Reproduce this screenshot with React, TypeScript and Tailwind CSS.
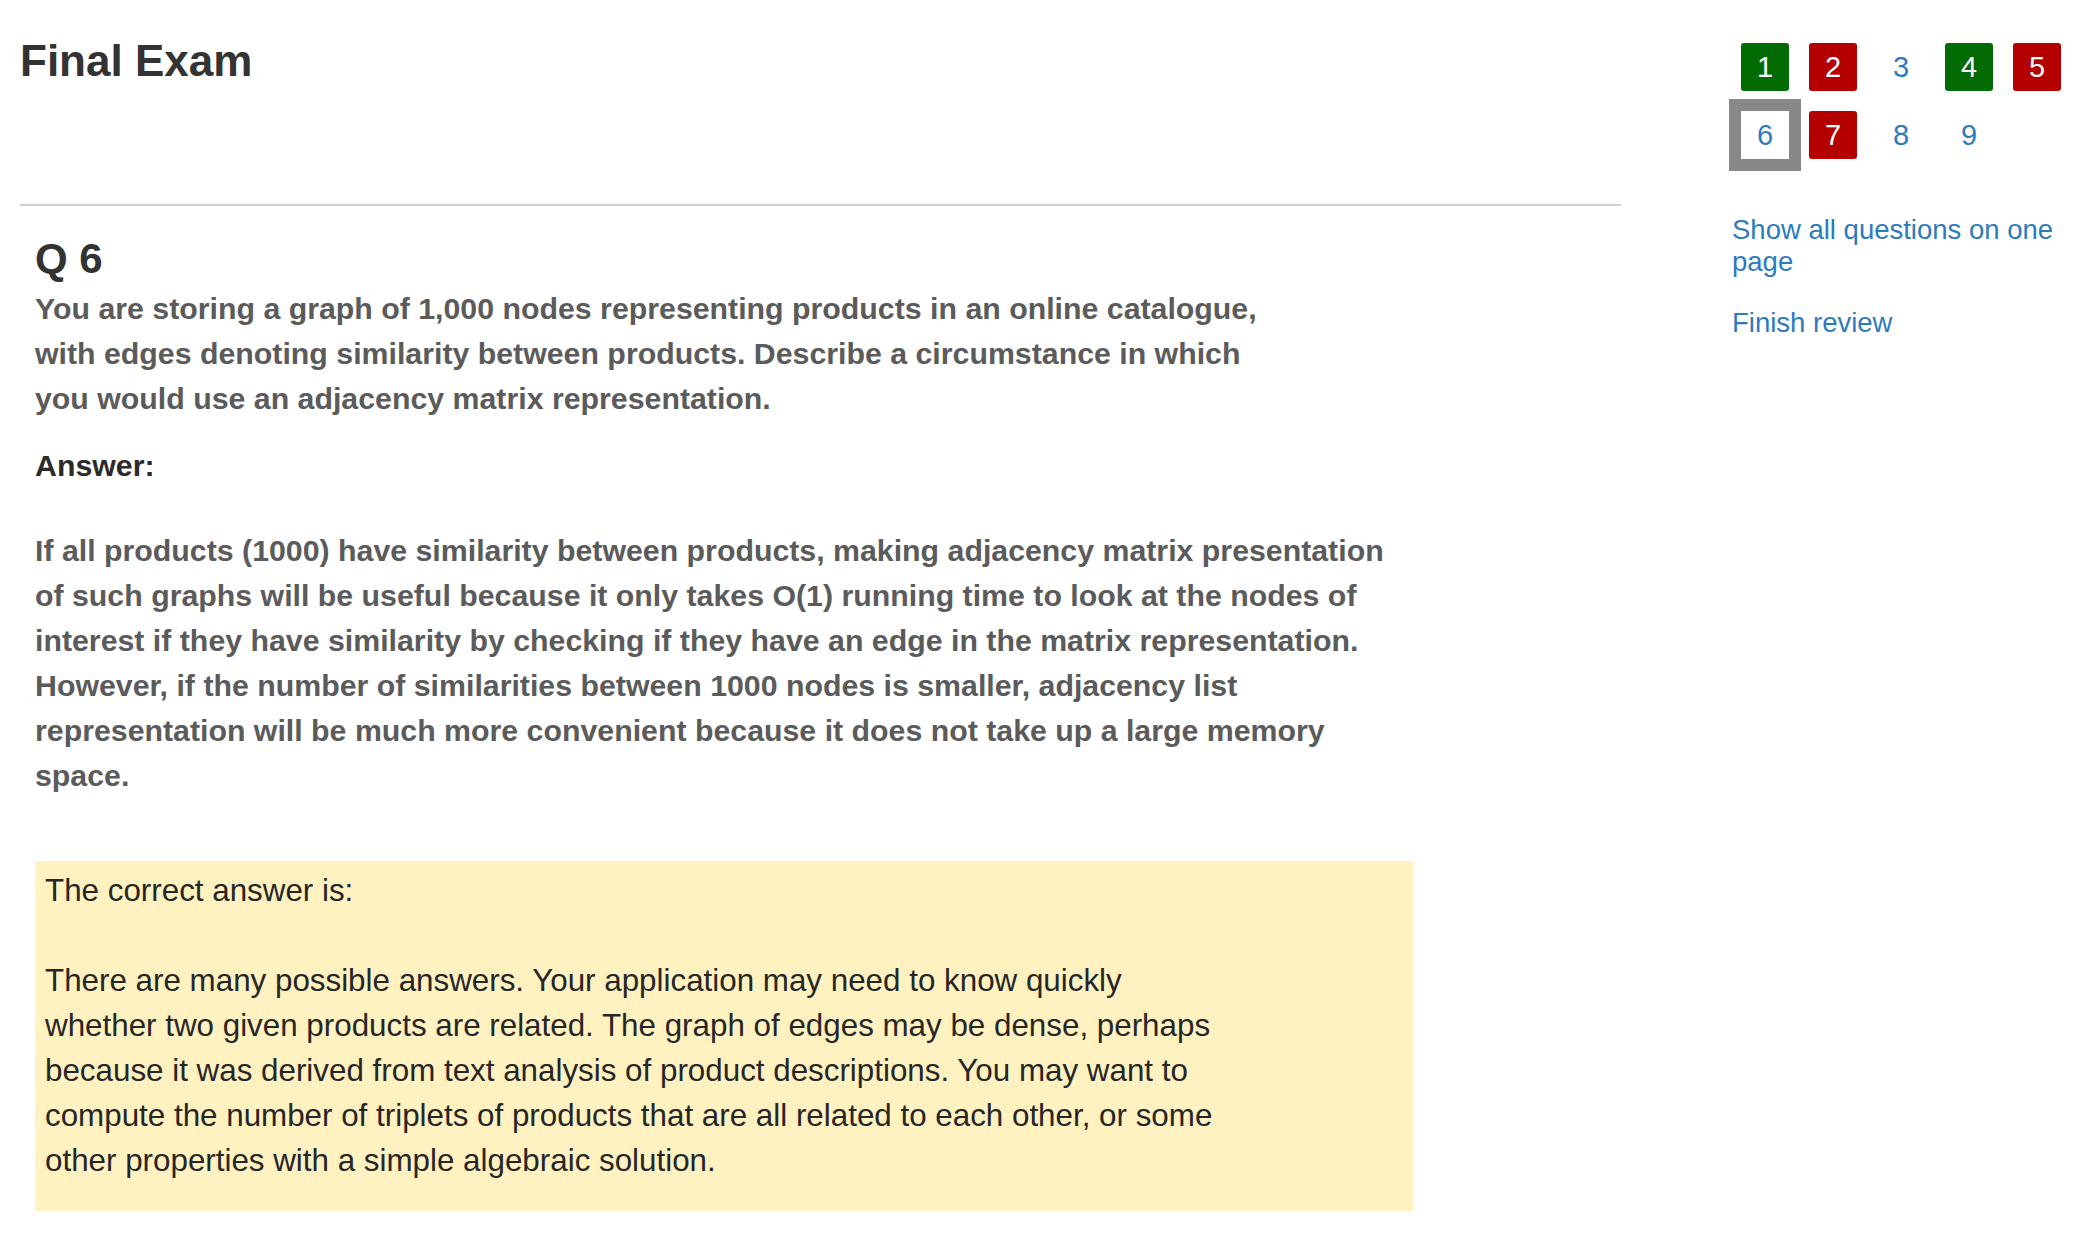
const questions = [
  { n: 1, state: "correct" },
  { n: 2, state: "wrong" },
  { n: 3, state: "none" },
  { n: 4, state: "correct" },
  { n: 5, state: "wrong" },
  { n: 6, state: "current" },
  { n: 7, state: "wrong" },
  { n: 8, state: "none" },
  { n: 9, state: "none" },
];

const font = "font-['Liberation_Sans',Arial,sans-serif]";

function QuestionButton({ n, state }: { n: number; state: string }) {
  let cls = "text-[#2b7bbd]";
  if (state === "correct") cls = "bg-[#036b03] text-white rounded-[3px]";
  if (state === "wrong") cls = "bg-[#b50000] text-white rounded-[3px]";
  if (state === "current") cls = "bg-white text-[#2b7bbd] shadow-[0_0_0_12px_#888888]";

  return (
    <a
      href="#"
      className={`w-12 h-12 flex items-center justify-center text-[29px] leading-none ${cls}`}
    >
      {n}
    </a>
  );
}

export default function App() {
  return (
    <div className={`min-h-screen bg-white ${font} flex pl-5 pr-5`}>
      {/* MAIN */}
      <div className="w-[1601px] shrink-0">
        <h1 className="text-[44px] leading-[48px] font-bold text-[#333333] pt-[37px] h-[204px]">
          Final Exam
        </h1>
        <hr className="border-0 h-[2px] bg-[#cfcfcf]" />

        <div className="pl-[15px] pt-[29px]">
          <h2 className="text-[42px] leading-[48px] font-bold text-[#333333]">Q 6</h2>
          <p className="mt-[3px] max-w-[1250px] text-[30.3px] leading-[45px] font-bold text-[#5b5b5b]">
            You are storing a graph of 1,000 nodes representing products in an online catalogue,
            with edges denoting similarity between products. Describe a circumstance in which you
            would use an adjacency matrix representation.
          </p>

          <div className="mt-[22px] text-[30.3px] leading-[45px] font-bold text-[#2b2b2b]">Answer:</div>

          <p className="mt-[40px] max-w-[1360px] text-[30.3px] leading-[45px] font-bold text-[#5b5b5b]">
            If all products (1000) have similarity between products, making adjacency matrix
            presentation of such graphs will be useful because it only takes O(1) running time to
            look at the nodes of interest if they have similarity by checking if they have an edge
            in the matrix representation. However, if the number of similarities between 1000 nodes
            is smaller, adjacency list representation will be much more convenient because it does
            not take up a large memory space.
          </p>

          <div className="mt-[63px] w-[1378px] bg-[#fff1c0] pl-[10px] pt-[7px] pb-[28px] text-[31.35px] leading-[45px] text-[#262626]">
            <p>The correct answer is:</p>
            <p className="mt-[45px] max-w-[1188px]">
              There are many possible answers. Your application may need to know quickly whether
              two given products are related. The graph of edges may be dense, perhaps because it
              was derived from text analysis of product descriptions. You may want to compute the
              number of triplets of products that are all related to each other, or some other
              properties with a simple algebraic solution.
            </p>
          </div>
        </div>
      </div>

      {/* NAVIGATION */}
      <div className="ml-[111px] w-[340px] shrink-0 pt-[43px]">
        <div className="pl-[9px] grid grid-cols-[repeat(5,48px)] gap-x-5 gap-y-5">
          {questions.map((q) => (
            <QuestionButton key={q.n} n={q.n} state={q.state} />
          ))}
        </div>
        <div className="mt-[55px] text-[27.5px] leading-[32px] text-[#2b7bbd]">
          <a href="#" className="block">
            Show all questions on one page
          </a>
          <a href="#" className="block mt-[29px]">
            Finish review
          </a>
        </div>
      </div>
    </div>
  );
}
